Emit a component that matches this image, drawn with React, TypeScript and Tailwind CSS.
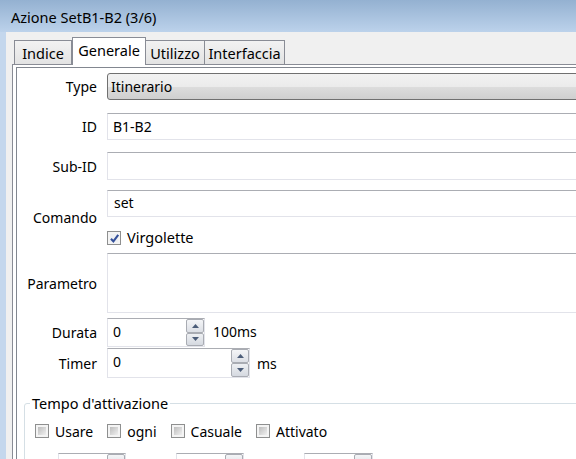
import React from "react";

function Check({ checked }: { checked?: boolean }) {
  return (
    <span className="relative inline-flex h-[14px] w-[14px] shrink-0 border border-[#8e8f8f] bg-[#f4f4f4] p-[2px]">
      {checked ? (
        <span className="block h-full w-full bg-[#eef0f3]" />
      ) : (
        <span className="block h-full w-full bg-linear-to-br from-[#bdbdbd] to-[#f0f0f0]" />
      )}
      {checked && (
        <svg className="absolute left-[1px] top-[1px] h-[11px] w-[11px]" viewBox="0 0 10 10">
          <path d="M1.8 5.2 L4 7.6 L8.4 1.8" stroke="#34509a" strokeWidth="1.9" fill="none" />
        </svg>
      )}
    </span>
  );
}

function SpinButtons() {
  return (
    <div className="flex w-[18px] shrink-0 flex-col">
      <div className="flex flex-1 items-center justify-center rounded-[2px] border border-[#a9acb3] bg-linear-to-b from-[#f4f5f7] to-[#dcdfe5]">
        <svg viewBox="0 0 7 4" className="h-[4px] w-[7px]">
          <path d="M0 4 L3.5 0 L7 4 Z" fill="#4c5d79" />
        </svg>
      </div>
      <div className="flex flex-1 items-center justify-center rounded-[2px] border border-[#a9acb3] bg-linear-to-b from-[#eef0f3] to-[#d5d9e0]">
        <svg viewBox="0 0 7 4" className="h-[4px] w-[7px]">
          <path d="M0 0 L7 0 L3.5 4 Z" fill="#4c5d79" />
        </svg>
      </div>
    </div>
  );
}

function Label({ children, extra = "" }: { children: React.ReactNode; extra?: string }) {
  return <div className={"w-[80px] shrink-0 text-right text-[14px] leading-[19px] " + extra}>{children}</div>;
}

export default function App() {
  const tabs = [
    { name: "Indice", w: "w-[58px]" },
    { name: "Generale", w: "w-[74px]" },
    { name: "Utilizzo", w: "w-[59px]" },
    { name: "Interfaccia", w: "w-[80px]" },
  ];
  const boxes = ["Usare", "ogni", "Casuale", "Attivato"];
  return (
    <div
      className="relative h-[459px] w-[576px] overflow-hidden bg-[#f0f0f0] text-black"
      style={{ fontFamily: "'Noto Sans', 'Open Sans', sans-serif" }}
    >
      {/* Title bar */}
      <div className="flex h-[32px] items-center bg-linear-to-b from-[#94b1d1] to-[#bcd2eb] pl-[11px] pt-[4px] text-[14.5px]">
        Azione SetB1-B2 (3/6)
      </div>

      <div className="flex h-[427px]">
        {/* window frame left */}
        <div className="w-[6px] shrink-0 bg-[#c4d7ed]" />

        <div className="w-[660px] shrink-0 pl-[6px] pt-[5px]">
          {/* Tabs */}
          <div className="flex h-[27px] items-end pl-[2px]">
            {tabs.map((t) =>
              t.name === "Generale" ? (
                <div
                  key={t.name}
                  className={`relative z-10 -mb-[1px] flex h-[28px] items-start justify-center border border-b-0 border-[#898c95] bg-white pt-[3px] text-[14.5px] leading-[19px] ${t.w}`}
                >
                  {t.name}
                </div>
              ) : (
                <div
                  key={t.name}
                  className={`flex h-[24px] items-start justify-center border border-b-0 border-l-0 first:border-l border-[#898c95] bg-linear-to-b from-[#f2f2f2] to-[#e3e3e3] pt-[3px] text-[14.5px] leading-[19px] ${t.w}`}
                >
                  {t.name}
                </div>
              )
            )}
          </div>

          {/* Tab pane */}
          <div className="h-[400px] border-l border-t border-[#898c95] bg-white pl-[3px] pt-[2px]">
            <div className="h-full border-l border-t border-[#828790] bg-white pt-[5px]">
              <div className="flex flex-col">
                {/* Type */}
                <div className="flex h-[27px] items-center">
                  <Label>Type</Label>
                  <div className="ml-[10px] flex h-full flex-1 items-center rounded-[3px] border border-[#707070] bg-[linear-gradient(to_bottom,#f2f2f2_0%,#ebebeb_50%,#dddddd_50%,#cfcfcf_100%)] pl-[3px] text-[14px]">
                    Itinerario
                  </div>
                </div>

                {/* ID */}
                <div className="mt-[13px] flex h-[27px] items-center">
                  <Label>ID</Label>
                  <div className="ml-[10px] flex h-full flex-1 items-center border border-[#e2e3ea] border-t-[#abadb3] pl-[5px] text-[14px]">
                    B1-B2
                  </div>
                </div>

                {/* Sub-ID */}
                <div className="mt-[12px] flex h-[28px] items-center">
                  <Label>Sub-ID</Label>
                  <div className="ml-[10px] h-full flex-1 border border-[#e2e3ea] border-t-[#abadb3]" />
                </div>

                {/* Comando */}
                <div className="mt-[10px] flex items-center">
                  <Label extra="mb-[8px]">Comando</Label>
                  <div className="ml-[10px] flex flex-1 flex-col">
                    <div className="flex h-[27px] items-center border border-[#e2e3ea] border-t-[#abadb3] pb-[3px] pl-[6px] text-[14px]">
                      set
                    </div>
                    <div className="mt-[7px] flex h-[28px] items-center gap-[6px] text-[14.5px]">
                      <Check checked />
                      <span>Virgolette</span>
                    </div>
                  </div>
                </div>

                {/* Parametro */}
                <div className="mt-[1px] flex h-[60px] items-center">
                  <Label>Parametro</Label>
                  <div className="ml-[10px] h-full flex-1 border border-[#e2e3ea] border-t-[#abadb3]" />
                </div>

                {/* Durata */}
                <div className="mt-[5px] flex h-[29px] items-center">
                  <Label>Durata</Label>
                  <div className="ml-[10px] flex h-full w-[98px] border border-[#e2e3ea] border-t-[#abadb3]">
                    <div className="flex flex-1 items-center pb-[3px] pl-[5px] text-[14px]">0</div>
                    <SpinButtons />
                  </div>
                  <span className="ml-[8px] pb-[3px] text-[14px]">100ms</span>
                </div>

                {/* Timer */}
                <div className="mt-[1px] flex h-[30px] items-center">
                  <Label>Timer</Label>
                  <div className="ml-[10px] flex h-full w-[143px] border border-[#e2e3ea] border-t-[#abadb3]">
                    <div className="flex flex-1 items-center pb-[3px] pl-[5px] text-[14px]">0</div>
                    <SpinButtons />
                  </div>
                  <span className="ml-[7px] text-[14px]">ms</span>
                </div>

                {/* Tempo d'attivazione */}
                <fieldset className="ml-[7px] mt-[16px] rounded-[3px] border border-[#d5dfe5] pb-[20px] pl-[10px]">
                  <legend className="-ml-[5px] px-[2px] text-[14.5px] leading-[19px]">Tempo d'attivazione</legend>
                  <div className="mt-[8px] flex h-[20px] items-center gap-[14px] text-[14px]">
                    {boxes.map((b) => (
                      <label key={b} className="flex items-center gap-[6px]">
                        <Check />
                        <span>{b}</span>
                      </label>
                    ))}
                  </div>
                  <div className="mt-[12px] flex h-[28px]">
                    <div className="ml-[23px] flex h-full w-[68px] border border-[#e2e3ea] border-t-[#abadb3]">
                      <div className="flex-1" />
                      <SpinButtons />
                    </div>
                    <div className="ml-[50px] flex h-full w-[68px] border border-[#e2e3ea] border-t-[#abadb3]">
                      <div className="flex-1" />
                      <SpinButtons />
                    </div>
                    <div className="ml-[60px] flex h-full w-[69px] border border-[#e2e3ea] border-t-[#abadb3]">
                      <div className="flex-1" />
                      <SpinButtons />
                    </div>
                  </div>
                </fieldset>
              </div>
            </div>
          </div>
        </div>
      </div>
    </div>
  );
}
